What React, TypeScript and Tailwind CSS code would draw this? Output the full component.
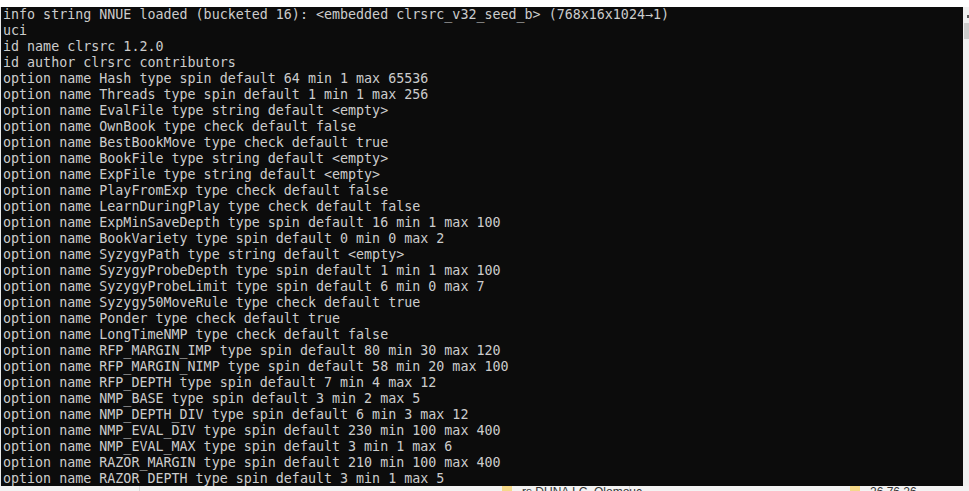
const lines = [
  "info string NNUE loaded (bucketed 16): <embedded clrsrc_v32_seed_b> (768x16x1024\u21921)",
  "uci",
  "id name clrsrc 1.2.0",
  "id author clrsrc contributors",
  "option name Hash type spin default 64 min 1 max 65536",
  "option name Threads type spin default 1 min 1 max 256",
  "option name EvalFile type string default <empty>",
  "option name OwnBook type check default false",
  "option name BestBookMove type check default true",
  "option name BookFile type string default <empty>",
  "option name ExpFile type string default <empty>",
  "option name PlayFromExp type check default false",
  "option name LearnDuringPlay type check default false",
  "option name ExpMinSaveDepth type spin default 16 min 1 max 100",
  "option name BookVariety type spin default 0 min 0 max 2",
  "option name SyzygyPath type string default <empty>",
  "option name SyzygyProbeDepth type spin default 1 min 1 max 100",
  "option name SyzygyProbeLimit type spin default 6 min 0 max 7",
  "option name Syzygy50MoveRule type check default true",
  "option name Ponder type check default true",
  "option name LongTimeNMP type check default false",
  "option name RFP_MARGIN_IMP type spin default 80 min 30 max 120",
  "option name RFP_MARGIN_NIMP type spin default 58 min 20 max 100",
  "option name RFP_DEPTH type spin default 7 min 4 max 12",
  "option name NMP_BASE type spin default 3 min 2 max 5",
  "option name NMP_DEPTH_DIV type spin default 6 min 3 max 12",
  "option name NMP_EVAL_DIV type spin default 230 min 100 max 400",
  "option name NMP_EVAL_MAX type spin default 3 min 1 max 6",
  "option name RAZOR_MARGIN type spin default 210 min 100 max 400",
  "option name RAZOR_DEPTH type spin default 3 min 1 max 5",
]

export default function App() {
  return (
    <div className="w-[969px] h-[491px] bg-white flex flex-col overflow-hidden">
      {/* window top edge */}
      <div className="h-[7px] bg-white shrink-0" />

      <div className="flex flex-1 min-h-0">
        <div className="w-[1px] bg-[#e8e8e8]" />
        {/* console */}
        <div className="flex-1 bg-[#0c0c0c] pl-[2px] overflow-hidden">
          <pre className="font-['DejaVu_Sans_Mono','Liberation_Mono',monospace] text-[13.33px] leading-[16px] text-[#cccccc] whitespace-pre">
            {lines.join("\n")}
          </pre>
        </div>
        {/* scrollbar */}
        <div className="w-[6px] bg-[#f0f0f0] flex flex-col items-end pt-[8px]">
          <div className="w-[2px] h-[3px] bg-[#606060] mb-[5px]" />
          <div className="w-[5px] h-[16px] bg-[#cdcdcd]" />
        </div>
      </div>

      {/* part of the window below */}
      <div className="h-[5px] shrink-0 bg-[#f3f3f3] flex items-start overflow-hidden relative font-['Liberation_Sans',sans-serif] text-[12px] text-[#333]">
        <div className="w-[140px] h-full border-r border-[#d8d8d8]" />
        <div className="w-[362px]" />
        <div className="w-[10px] h-full bg-[#f5d98a]" />
        <div className="w-[118px] h-full border-r border-[#d8d8d8] leading-[12px] pl-[10px] whitespace-nowrap">
          rs DUNA I.C. Olomouc
        </div>
        <div className="w-[220px]" />
        <div className="w-[10px] h-full bg-[#f5d98a]" />
        <div className="leading-[12px] pl-[10px] whitespace-nowrap">26.76.26</div>
      </div>
    </div>
  )
}
